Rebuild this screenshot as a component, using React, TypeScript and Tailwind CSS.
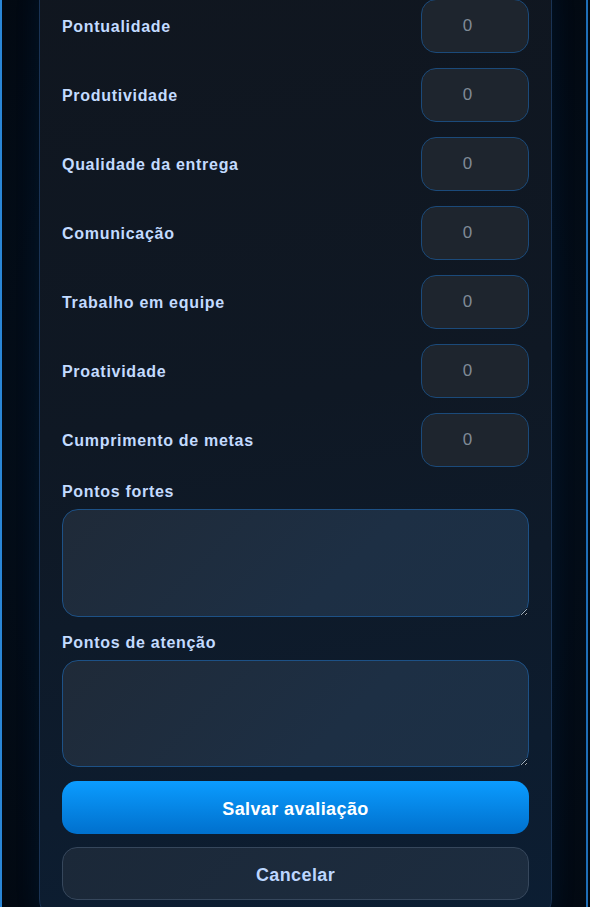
import { useState } from "react";

const criterios = [
  "Pontualidade",
  "Produtividade",
  "Qualidade da entrega",
  "Comunicação",
  "Trabalho em equipe",
  "Proatividade",
  "Cumprimento de metas",
];

const font = { fontFamily: '"Liberation Sans", Arial, sans-serif' };

export default function App() {
  const [notas, setNotas] = useState<Record<string, string>>({});

  return (
    <div style={font} className="h-[907px] overflow-hidden bg-[#02080f] pr-[2px]">
      <div className="flex h-full flex-col border-x-2 border-l-[#2a86d6] border-r-[#1f6fb8] bg-[radial-gradient(ellipse_at_center,#061a2e_0%,#030d19_60%,#020912_100%)]">
        <div className="-mt-[24px] ml-[37px] w-[513px] shrink-0 rounded-[24px] border border-[#1a3354] bg-[linear-gradient(170deg,#10161f_0%,#0f1824_45%,#0c1e33_100%)] px-[22px] pb-[22px] pt-[22px] shadow-[0_0_24px_rgba(10,80,160,0.15)]">
          <div className="flex flex-col gap-[15px]">
            {criterios.map((c) => (
              <div key={c} className="flex h-[54px] items-center justify-between">
                <label className="pt-[2px] text-[16px] font-bold tracking-[0.7px] text-[#c3dbff]">
                  {c}
                </label>
                <input
                  type="number"
                  value={notas[c] ?? ""}
                  placeholder="0"
                  onChange={(e) => setNotas({ ...notas, [c]: e.target.value })}
                  className="h-[54px] w-[108px] rounded-[15px] border border-[#1b4a7a] bg-[#1e252e] text-center text-[17px] text-[#d8dee6] outline-none placeholder:text-[#808a97] [appearance:textfield]"
                />
              </div>
            ))}
          </div>

          <div className="mt-[15px] flex flex-col gap-[14px]">
            <div className="flex flex-col gap-[7px]">
              <label className="text-[16px] font-bold leading-[20px] tracking-[0.7px] text-[#c3dbff]">
                Pontos fortes
              </label>
              <textarea className="h-[108px] w-full resize-y rounded-[16px] border border-[#1d5186] bg-[linear-gradient(135deg,#1f2a38_0%,#1d2f44_60%,#1c3046_100%)] p-3 text-[15px] text-[#d8dee6] outline-none" />
            </div>
            <div className="mt-[2px] flex flex-col gap-[7px]">
              <label className="text-[16px] font-bold leading-[20px] tracking-[0.7px] text-[#c3dbff]">
                Pontos de atenção
              </label>
              <textarea className="h-[107px] w-full resize-y rounded-[16px] border border-[#1d5186] bg-[linear-gradient(135deg,#1f2a38_0%,#1d2f44_60%,#1c3046_100%)] p-3 text-[15px] text-[#d8dee6] outline-none" />
            </div>

            <button className="h-[53px] w-full rounded-[15px] bg-[linear-gradient(180deg,#0b9cff_0%,#0070cd_100%)] pt-[3px] text-[18px] font-bold tracking-[0.4px] text-white">
              Salvar avaliação
            </button>
            <button className="-mt-px h-[53px] w-full rounded-[15px] border border-[#36475c] bg-[linear-gradient(135deg,#1b2838_0%,#1d2d40_100%)] pt-[3px] text-[18px] font-bold tracking-[0.4px] text-[#bcd6ff]">
              Cancelar
            </button>
          </div>
        </div>
      </div>
    </div>
  );
}
